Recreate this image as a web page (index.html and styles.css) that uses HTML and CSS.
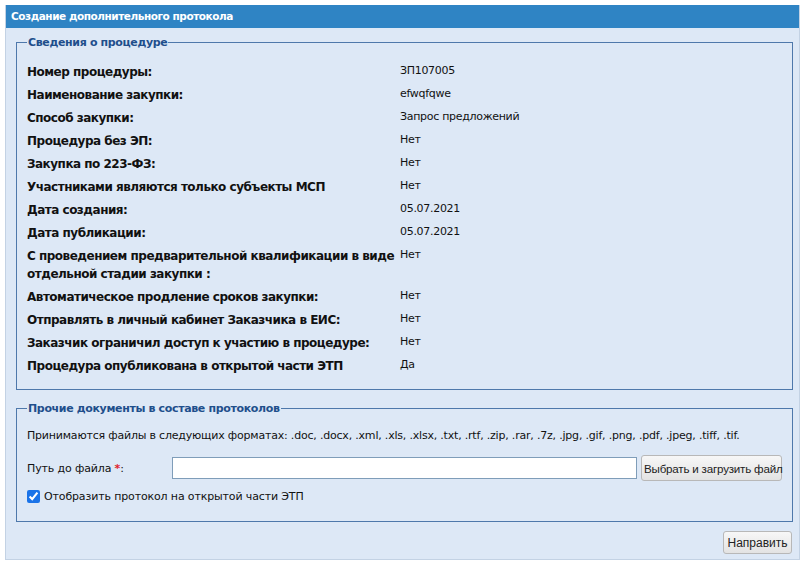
FILE: index.html
```html
<!DOCTYPE html>
<html lang="ru">
<head>
<meta charset="utf-8">
<link rel="stylesheet" href="styles.css">
</head>
<body>
<div class="window">
  <div class="title">Создание дополнительного протокола</div>
  <div class="body">
    <fieldset class="fs fs-info">
      <legend>Сведения о процедуре</legend>
      <div class="grid">
        <div class="lbl">Номер процедуры:</div><div class="val">ЗП107005</div>
        <div class="lbl">Наименование закупки:</div><div class="val">efwqfqwe</div>
        <div class="lbl">Способ закупки:</div><div class="val">Запрос предложений</div>
        <div class="lbl">Процедура без ЭП:</div><div class="val">Нет</div>
        <div class="lbl">Закупка по 223-ФЗ:</div><div class="val">Нет</div>
        <div class="lbl">Участниками являются только субъекты МСП</div><div class="val">Нет</div>
        <div class="lbl">Дата создания:</div><div class="val">05.07.2021</div>
        <div class="lbl">Дата публикации:</div><div class="val">05.07.2021</div>
        <div class="lbl">С проведением предварительной квалификации в виде отдельной стадии закупки :</div><div class="val">Нет</div>
        <div class="lbl">Автоматическое продление сроков закупки:</div><div class="val">Нет</div>
        <div class="lbl">Отправлять в личный кабинет Заказчика в ЕИС:</div><div class="val">Нет</div>
        <div class="lbl">Заказчик ограничил доступ к участию в процедуре:</div><div class="val">Нет</div>
        <div class="lbl">Процедура опубликована в открытой части ЭТП</div><div class="val">Да</div>
      </div>
    </fieldset>
    <fieldset class="fs fs-docs">
      <legend>Прочие документы в составе протоколов</legend>
      <div class="formats">Принимаются файлы в следующих форматах: .doc, .docx, .xml, .xls, .xlsx, .txt, .rtf, .zip, .rar, .7z, .jpg, .gif, .png, .pdf, .jpeg, .tiff, .tif.</div>
      <div class="file-row">
        <label class="file-lbl">Путь до файла <span class="req">*</span>:</label>
        <input class="file-input" type="text">
        <button class="btn btn-upload" type="button">Выбрать и загрузить файл</button>
      </div>
      <label class="check-row"><input type="checkbox" checked class="chk"> Отобразить протокол на открытой части ЭТП</label>
    </fieldset>
    <div class="actions">
      <button class="btn btn-send" type="button">Направить</button>
    </div>
  </div>
</div>
</body>
</html>
```
FILE: styles.css
```css
* { box-sizing: border-box; }
html, body { margin: 0; padding: 0; background: #ffffff; }
body {
  padding: 5px 5px 0 5px;
  font-family: "DejaVu Sans", Verdana, sans-serif;
  font-size: 12px;
  color: #111;
}
.window {
  width: 795px;
  height: 555px;
  background: #dde8f6;
  border: 1px solid #c3d2e4;
  border-top: none;
  display: flex;
  flex-direction: column;
}
.title {
  background: #2f84c4;
  color: #fff;
  font-weight: bold;
  font-size: 10.5px;
  height: 23px;
  line-height: 23px;
  padding-left: 5px;
  letter-spacing: -0.45px;
}
.body {
  padding: 8px 6px 0 10px;
  display: flex;
  flex-direction: column;
}
.fs {
  margin: 0;
  border: 1px solid #4e78ab;
  padding: 0 10px;
}
.fs legend {
  color: #1f4f8c;
  font-weight: bold;
  font-size: 11px;
  padding: 0 1px;
  margin-left: 0;
  letter-spacing: -0.35px;
}
.fs-info { height: 354px; padding-top: 12px; }
.grid {
  display: grid;
  grid-template-columns: 373px 1fr;
  column-gap: 0;
}
.lbl {
  font-weight: bold;
  font-size: 12px;
  letter-spacing: -0.5px;
  line-height: 18px;
  padding: 2px 0 3px 0;
}
.val {
  font-size: 11px;
  letter-spacing: -0.3px;
  line-height: 18px;
  padding: 1px 0 4px 0;
}
.fs-docs { margin-top: 12px; height: 120px; padding-top: 13px; }
.formats { font-size: 11px; letter-spacing: -0.2px; line-height: 16px; }
.file-row { display: flex; align-items: center; margin-top: 11px; }
.file-lbl { width: 145px; font-size: 11px; letter-spacing: -0.14px; }
.req { color: #e0242a; font-weight: bold; }
.file-input {
  width: 465px;
  height: 22px;
  border: 1px solid #7f9db9;
  background: #fff;
  margin: 0;
}
.btn {
  font-family: "Liberation Sans", Arial, sans-serif;
  font-size: 12px;
  color: #222;
  background: linear-gradient(#f7f7f7, #e3e3e3);
  border: 1px solid #b8b8b8;
  border-radius: 3px;
  padding: 0 2px;
  height: 26px;
  white-space: nowrap;
}
.btn-upload { margin-left: 4px; width: 141px; font-size: 11.6px; letter-spacing: -0.2px; }
.check-row { display: flex; align-items: center; margin-top: 9px; font-size: 11px; letter-spacing: -0.14px; }
.chk { margin: 0 4px 0 0; width: 13px; height: 13px; accent-color: #1a73e8; }
.actions { display: flex; justify-content: flex-end; padding-top: 9px; padding-right: 1px; }
.btn-send { height: 23px; width: 69px; }
```
